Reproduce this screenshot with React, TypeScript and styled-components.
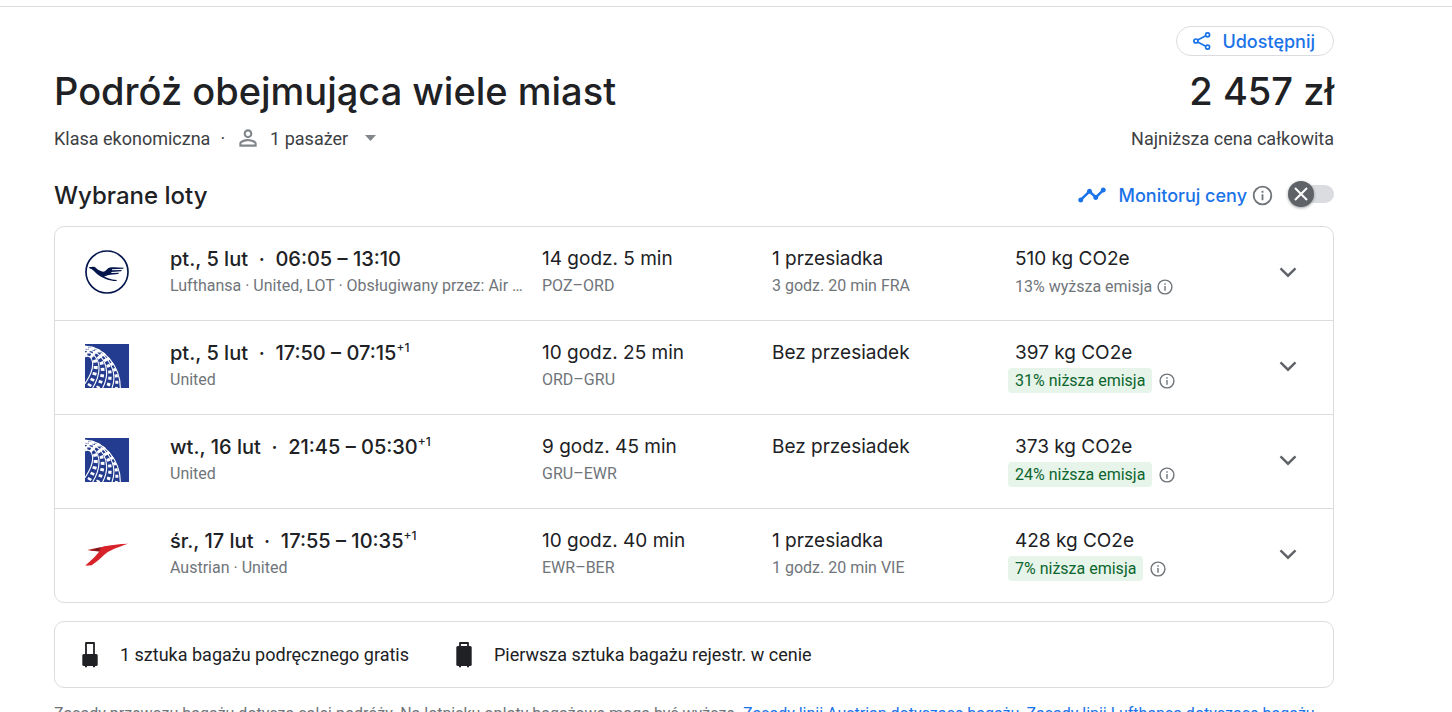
import React from "react";
import styled, { createGlobalStyle } from "styled-components";

const GlobalStyle = createGlobalStyle`
  *, *::before, *::after { box-sizing: border-box; }
  body {
    margin: 0;
    background: #fff;
    color: #202124;
    font-family: Roboto, sans-serif;
    font-size: 18px;
  }
  h1, h2, p, ul { margin: 0; padding: 0; }
  button { font: inherit; border: 0; background: none; padding: 0; cursor: pointer; }
  svg { display: block; flex: none; }
`;

const display = `font-family: Inter, sans-serif;`;

const TopRule = styled.div`
  height: 7px;
  border-bottom: 1px solid #dadce0;
`;

const Page = styled.main`
  margin: 0 118px 0 54px;
  padding: 19px 0 24px;
`;

const Toolbar = styled.div`
  display: flex;
  justify-content: flex-end;
`;

const ShareButton = styled.button`
  ${display}
  display: flex;
  align-items: center;
  gap: 11px;
  height: 30px;
  && {
    padding: 0 18px 0 16px;
    border: 1px solid #dadce0;
  }
  border-radius: 15px;
  color: #1a73e8;
  font-weight: 500;
  font-size: 18px;
`;

const HeadRow = styled.header`
  display: flex;
  justify-content: space-between;
  margin-top: 11px;
  line-height: 48px;
`;

const Title = styled.h1`
  ${display}
  font-size: 38px;
  font-weight: 500;
`;

const Price = styled.div`
  ${display}
  font-size: 38px;
  font-weight: 500;
`;

const MetaRow = styled.div`
  display: flex;
  align-items: center;
  justify-content: space-between;
  height: 24px;
  margin-top: 11px;
  color: #3c4043;
`;

const Meta = styled.div`
  display: flex;
  align-items: center;
  gap: 10px;
`;

const PassengerButton = styled.button`
  display: flex;
  align-items: center;
  color: inherit;
  gap: 9px;
`;

const Caret = styled.svg`
  margin-left: 8px;
`;

const SectionRow = styled.div`
  display: flex;
  align-items: center;
  justify-content: space-between;
  height: 32px;
  margin: 29px 0 15px;
`;

const SectionTitle = styled.h2`
  ${display}
  font-size: 24px;
  font-weight: 500;
`;

const Tracking = styled.div`
  display: flex;
  align-items: center;
`;

const TrackLabel = styled.label`
  ${display}
  margin: 0 4px 0 12px;
  color: #1a73e8;
  font-size: 18px;
  font-weight: 500;
`;

const IconButton = styled.button`
  display: flex;
  color: #70757a;
`;

const Switch = styled.span`
  position: relative;
  display: flex;
  align-items: center;
  justify-content: flex-end;
  width: 46px;
  height: 26px;
  margin: 0 0 3px 14px;
`;

const SwitchInput = styled.input`
  appearance: none;
  width: 40px;
  height: 18px;
  margin: 0;
  border-radius: 9px;
  background: #dadce0;
  cursor: pointer;
`;

const Knob = styled.span`
  position: absolute;
  top: 0;
  left: 0;
  display: flex;
  align-items: center;
  justify-content: center;
  width: 26px;
  height: 26px;
  border-radius: 50%;
  background: #5f6368;
  box-shadow: 0 1px 3px rgba(60, 64, 67, 0.5);
  pointer-events: none;
`;

const Card = styled.ul`
  list-style: none;
  border: 1px solid #dadce0;
  border-radius: 10px;
`;

const FlightRow = styled.li`
  display: grid;
  grid-template-columns: 85px 372fr 230fr 236fr 271fr 54px;
  align-items: center;
  padding: 17px 0 21px 30px;
  & + & { border-top: 1px solid #dadce0; }
`;

const Cell = styled.div`
  align-self: start;
  min-width: 0;
`;

const Main = styled.div<{ $strong?: boolean }>`
  ${display}
  font-size: ${(p) => (p.$strong ? 20 : 19)}px;
  font-weight: ${(p) => (p.$strong ? 500 : 400)};
  line-height: 30px;
  white-space: pre;
`;

const DayShift = styled.sup`
  font-size: 12px;
  line-height: 0;
`;

const Sub = styled.div`
  padding-right: 16px;
  color: #70757a;
  font-size: 16px;
  line-height: 24px;
  white-space: nowrap;
  overflow: hidden;
  text-overflow: ellipsis;
`;

const EmissionMain = styled(Main)`
  padding-left: 7px;
`;

const Emission = styled.div`
  display: flex;
  align-items: center;
  font-size: 16px;
`;

const EmissionTag = styled.span<{ $low: boolean }>`
  margin-right: ${(p) => (p.$low ? 6 : 0)}px;
  padding: 0 ${(p) => (p.$low ? 7 : 4)}px 0 7px;
  border-radius: 4px;
  line-height: 25px;
  background: ${(p) => (p.$low ? "#e6f4ea" : "transparent")};
  color: ${(p) => (p.$low ? "#0d652d" : "#70757a")};
`;

const Expand = styled.button`
  display: flex;
  color: #5f6368;
`;

const Baggage = styled(Card)`
  display: flex;
  align-items: center;
  gap: 47px;
  height: 67px;
  && {
    margin-top: 18px;
    padding: 0 27px;
  }
`;

const BaggageItem = styled.li`
  display: flex;
  align-items: center;
  gap: 22px;
`;

const Footnote = styled.p`
  && { margin-top: 16px; }
  color: #70757a;
  font-size: 16px;
  line-height: 20px;
`;

const Link = styled.a`
  color: #1a73e8;
  text-decoration: none;
`;

const InfoIcon = ({ size }: { size: number }) => (
  <svg width={size} height={size} viewBox="0 0 24 24" fill="none" stroke="currentColor" strokeWidth="1.9">
    <circle cx="12" cy="12" r="9.2" />
    <path d="M12 10.8V17M12 7v2" />
  </svg>
);

const ShareIcon = () => (
  <svg width="18" height="18" viewBox="0 0 18 18" fill="none" stroke="currentColor" strokeWidth="1.7">
    <circle cx="2.9" cy="9" r="2" />
    <circle cx="14.6" cy="2.8" r="2" />
    <circle cx="14.6" cy="15.2" r="2" />
    <path d="M4.7 8 12.8 3.8M4.700 10l8.1 4.2" />
  </svg>
);

const PersonIcon = () => (
  <svg width="26" height="26" viewBox="0 0 24 24" fill="#80868b">
    <path d="M12 5.9a2.1 2.1 0 110 4.2 2.1 2.1 0 010-4.2m0 9c2.97 0 6.1 1.46 6.1 2.1v1.1H5.9V17c0-.64 3.13-2.1 6.1-2.1M12 4C9.79 4 8 5.79 8 8s1.79 4 4 4 4-1.79 4-4-1.79-4-4-4zm0 9c-2.67 0-8 1.34-8 4v3h16v-3c0-2.66-5.33-4-8-4z" />
  </svg>
);

const TimelineIcon = () => (
  <svg width="30" height="30" viewBox="0 0 24 24" fill="#1a73e8">
    <path d="M23 8c0 1.1-.9 2-2 2-.18 0-.35-.02-.51-.07l-3.56 3.55c.05.16.07.34.07.52 0 1.1-.9 2-2 2s-2-.9-2-2c0-.18.02-.36.07-.52l-2.55-2.55c-.16.05-.34.07-.52.07s-.36-.02-.52-.07l-4.55 4.56c.05.16.07.33.07.51 0 1.1-.9 2-2 2s-2-.9-2-2 .9-2 2-2c.18 0 .35.02.51.07l4.56-4.55C8.02 9.36 8 9.18 8 9c0-1.1.9-2 2-2s2 .9 2 2c0 .18-.02.36-.07.52l2.55 2.55c.16-.05.34-.07.52-.07s.36.02.52.07l3.55-3.56C19.02 8.35 19 8.18 19 8c0-1.1.9-2 2-2s2 .9 2 2z" />
  </svg>
);

const ChevronIcon = () => (
  <svg width="18" height="18" viewBox="0 0 18 18" fill="none" stroke="currentColor" strokeWidth="2.4">
    <path d="M1.500 5.300 9 12.700l7.500-7.400" />
  </svg>
);

const CarryOnIcon = () => (
  <svg width="16" height="26" viewBox="0 0 16 26" fill="#202124">
    <path d="M4 1h8v12h-8z" fill="none" stroke="#202124" strokeWidth="1.8" strokeLinejoin="round" />
    <rect x="0.3" y="12" width="15.4" height="12" rx="1.5" />
    <path d="M3 23h2v2.300H3zM11 23h2v2.300h-2z" />
  </svg>
);

const SuitcaseIcon = () => (
  <svg width="16" height="26" viewBox="0 0 16 26" fill="#202124">
    <path d="M4 1h8v4H4z" fill="none" stroke="#202124" strokeWidth="1.8" strokeLinejoin="round" />
    <rect x="0.3" y="4" width="15.4" height="20" rx="1.5" />
    <path d="M3 23h2v2.300H3zM11 23h2v2.300h-2z" />
  </svg>
);

const LufthansaLogo = () => (
  <svg width="44" height="44" viewBox="45 42 132 132" fill="#05164d">
    <circle cx="111" cy="108" r="63" fill="none" stroke="#05164d" strokeWidth="5" />
    <path d="M57 93c3-1 5 1 8 0 5-2 10-1 13 3 5 5 12 9 21 11 6 0 9-4 13-8 4-4 11-5 19-5l31 1-3 3-33 2v3l30-1-3 4-29 2v3l24-1-4 4-22 2c-8 1-14 3-20 5 8 5 19 10 39 11l-2 3c-22 0-40-8-54-18-8-6-14-14-21-18-4 0-6-3-7-6z" />
  </svg>
);

const meridians = [
  "M45 43C100 43 151 102 151 168",
  "M45 48C98 46 148 108 126 168",
  "M45 55C90 48 130 104 98 168",
  "M45 63C76 54 108 100 68 168",
  "M45 74C66 64 84 98 45 155",
];

const tiles = [
  "M45 46C99 44 150 105 139 168",
  "M45 51C94 47 139 106 112 168",
  "M45 59C83 51 119 102 83 168",
  "M45 69C71 59 96 99 57 162",
];

const UnitedLogo = () => (
  <svg width="44" height="44" viewBox="45 36 132 132">
    <rect x="45" y="36" width="132" height="132" fill="#243c8f" />
    <g fill="none" stroke="#fff">
      {meridians.map((d) => (
        <path key={d} d={d} strokeWidth="3.4" />
      ))}
      {tiles.map((d, i) => (
        <path key={d} d={d} strokeWidth={9 + i} strokeDasharray="9 10" strokeDashoffset={i * 7} />
      ))}
    </g>
  </svg>
);

const AustrianLogo = () => (
  <svg width="44" height="44" viewBox="45 30 132 132">
    <defs>
      <linearGradient id="tail" x1="52" x2="104" y1="84" y2="80" gradientUnits="userSpaceOnUse">
        <stop offset="0" stopColor="#d8222a" />
        <stop offset="0.6" stopColor="#7d1518" />
        <stop offset="1" stopColor="#d8222a" />
      </linearGradient>
    </defs>
    <path d="M52 84c22-6 48-10 70-13L96 92c-4-5-24-3-44-8z" fill="url(#tail)" />
    <path d="M174 65c-26 1-52 4-70 8-10 3-12 7-15 13-8 14-28 30-43 45l19-1c12-8 26-20 37-31 14-14 40-23 72-34z" fill="#d8222a" />
  </svg>
);

const logos = { lufthansa: LufthansaLogo, united: UnitedLogo, austrian: AustrianLogo };

type Flight = {
  logo: keyof typeof logos;
  date: string;
  time: string;
  nextDay?: boolean;
  carrier: string;
  duration: string;
  route: string;
  stops: string;
  layover?: string;
  co2: string;
  emission: string;
  low: boolean;
};

const flights: Flight[] = [
  { logo: "lufthansa", date: "pt., 5 lut", time: "06:05 – 13:10", carrier: "Lufthansa · United, LOT · Obsługiwany przez: Air …", duration: "14 godz. 5 min", route: "POZ–ORD", stops: "1 przesiadka", layover: "3 godz. 20 min FRA", co2: "510 kg CO2e", emission: "13% wyższa emisja", low: false },
  { logo: "united", date: "pt., 5 lut", time: "17:50 – 07:15", nextDay: true, carrier: "United", duration: "10 godz. 25 min", route: "ORD–GRU", stops: "Bez przesiadek", co2: "397 kg CO2e", emission: "31% niższa emisja", low: true },
  { logo: "united", date: "wt., 16 lut", time: "21:45 – 05:30", nextDay: true, carrier: "United", duration: "9 godz. 45 min", route: "GRU–EWR", stops: "Bez przesiadek", co2: "373 kg CO2e", emission: "24% niższa emisja", low: true },
  { logo: "austrian", date: "śr., 17 lut", time: "17:55 – 10:35", nextDay: true, carrier: "Austrian · United", duration: "10 godz. 40 min", route: "EWR–BER", stops: "1 przesiadka", layover: "1 godz. 20 min VIE", co2: "428 kg CO2e", emission: "7% niższa emisja", low: true },
];

const FlightItem = ({ flight }: { flight: Flight }) => {
  const Logo = logos[flight.logo];
  return (
    <FlightRow>
      <Logo />
      <Cell>
        <Main $strong>
          {`${flight.date}  ·  ${flight.time}`}
          {flight.nextDay && <DayShift>+1</DayShift>}
        </Main>
        <Sub>{flight.carrier}</Sub>
      </Cell>
      <Cell>
        <Main>{flight.duration}</Main>
        <Sub>{flight.route}</Sub>
      </Cell>
      <Cell>
        <Main>{flight.stops}</Main>
        {flight.layover && <Sub>{flight.layover}</Sub>}
      </Cell>
      <Cell>
        <EmissionMain>{flight.co2}</EmissionMain>
        <Emission>
          <EmissionTag $low={flight.low}>{flight.emission}</EmissionTag>
          <IconButton aria-label="Informacje o emisji">
            <InfoIcon size={18} />
          </IconButton>
        </Emission>
      </Cell>
      <Expand aria-label="Szczegóły lotu">
        <ChevronIcon />
      </Expand>
    </FlightRow>
  );
};

export default function App() {
  return (
    <>
      <GlobalStyle />
      <TopRule />
      <Page>
        <Toolbar>
          <ShareButton>
            <ShareIcon />
            Udostępnij
          </ShareButton>
        </Toolbar>
        <HeadRow>
          <Title>Podróż obejmująca wiele miast</Title>
          <Price>2 457 zł</Price>
        </HeadRow>
        <MetaRow>
          <Meta>
            <span>Klasa ekonomiczna</span>
            <span>·</span>
            <PassengerButton>
              <PersonIcon />
              1 pasażer
              <Caret width="11" height="6" viewBox="0 0 11 6" fill="#80868b">
                <path d="M0 0h11L5.500 6z" />
              </Caret>
            </PassengerButton>
          </Meta>
          <span>Najniższa cena całkowita</span>
        </MetaRow>
        <SectionRow>
          <SectionTitle>Wybrane loty</SectionTitle>
          <Tracking>
            <TimelineIcon />
            <TrackLabel htmlFor="track-prices">Monitoruj ceny</TrackLabel>
            <IconButton aria-label="Informacje o monitorowaniu cen">
              <InfoIcon size={23} />
            </IconButton>
            <Switch>
              <SwitchInput id="track-prices" type="checkbox" role="switch" />
              <Knob>
                <svg width="14" height="14" viewBox="0 0 14 14" stroke="#fff" strokeWidth="2">
                  <path d="M1 1l12 12M13 1L1 13" />
                </svg>
              </Knob>
            </Switch>
          </Tracking>
        </SectionRow>
        <Card>
          {flights.map((flight) => (
            <FlightItem key={flight.route} flight={flight} />
          ))}
        </Card>
        <Baggage>
          <BaggageItem>
            <CarryOnIcon />
            1 sztuka bagażu podręcznego gratis
          </BaggageItem>
          <BaggageItem>
            <SuitcaseIcon />
            Pierwsza sztuka bagażu rejestr. w cenie
          </BaggageItem>
        </Baggage>
        <Footnote>
          Zasady przewozu bagażu dotyczą całej podróży. Na lotnisku opłaty bagażowe mogą być wyższe.{" "}
          <Link href="#austrian">Zasady linii Austrian dotyczące bagażu</Link>,{" "}
          <Link href="#lufthansa">Zasady linii Lufthansa dotyczące bagażu</Link>
        </Footnote>
      </Page>
    </>
  );
}
